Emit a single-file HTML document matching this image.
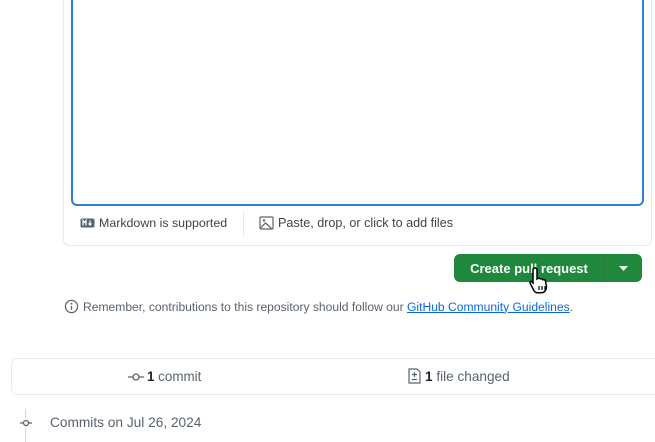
<!DOCTYPE html>
<html><head><style>
body{margin:0;width:655px;height:442px;overflow:hidden;background:#fff;font-family:"Liberation Sans",sans-serif;position:relative;color:#1f2328}
.a{position:absolute}
</style></head><body>
<div class="a" style="left:63px;top:-10px;width:587px;height:254px;border:1px solid #e8eaed;border-radius:6px"></div>
<div class="a" style="left:71px;top:-10px;width:569px;height:212px;border:2px solid #2f7fd6;border-radius:6px"></div>
<div class="a" style="left:80px;top:216px;font-size:12.4px;color:#3d444d;display:flex;align-items:center">
<svg width="15" height="10" viewBox="0 0 15 10" style="margin-right:4px"><rect x="0.5" y="0.5" width="14" height="9" rx="1.5" fill="#59636e"/><path d="M3 7.5V2.5l1.5 2 1.5-2v5M10 2.5v4M8.5 5.5l1.5 1.5 1.5-1.5" stroke="#fff" stroke-width="1.2" fill="none"/></svg>Markdown is supported</div>
<div class="a" style="left:243px;top:210px;width:1px;height:28px;background:#e8eaed"></div>
<div class="a" style="left:259px;top:216px;font-size:12.6px;color:#3d444d;display:flex;align-items:center">
<svg width="15" height="14" viewBox="0 0 15 14" style="margin-right:4px"><rect x="1" y="1" width="13" height="12" rx="1" fill="none" stroke="#59636e" stroke-width="1.2"/><circle cx="5" cy="4.5" r="1.2" fill="#59636e"/><path d="M1.5 12l5-5 6 5.5" stroke="#59636e" stroke-width="1.2" fill="none"/></svg>Paste, drop, or click to add files</div>
<div class="a" style="left:454px;top:254px;width:188px;height:28px;background:#1f883d;border-radius:6px"></div>
<div class="a" style="left:604px;top:254px;width:1px;height:28px;background:#2c7a3d"></div>
<div class="a" style="left:454px;top:261px;width:150px;text-align:center;color:#fff;font-size:13px;font-weight:bold">Create pull request</div>
<svg class="a" style="left:619px;top:266px" width="9" height="5"><path d="M0 0h9L4.5 5z" fill="#fff"/></svg>
<svg class="a" style="left:528px;top:266px" width="26" height="30" viewBox="0 0 26 30"><path d="M7 2c1.5 0 2 1 2 2v9l1-.5c1-.5 2 0 2.5.5 1-.5 2 0 2.5.8 1-.4 2 0 2.5 1l1 6c0 3-2 6-5 6h-4c-2 0-3-1-4-3L2 17c-.5-1 .5-2 1.5-1.5L5 17V4c0-1 .5-2 2-2z" fill="#fff" stroke="#000" stroke-width="1.5"/><path d="M11 20v4M14 20v4M17 20v4" stroke="#000" stroke-width="1.2"/></svg>
<div class="a" style="left:64px;top:299px;font-size:12.1px;color:#59636e;display:flex;align-items:center">
<svg width="15" height="15" viewBox="0 0 16 16" style="margin-right:4px"><circle cx="8" cy="8" r="6.5" fill="none" stroke="#59636e" stroke-width="1.3"/><circle cx="8" cy="5" r="1" fill="#59636e"/><path d="M8 7.5v4" stroke="#59636e" stroke-width="1.4"/></svg>Remember, contributions to this repository should follow our&nbsp;<span style="color:#0969da;text-decoration:underline">GitHub Community Guidelines</span>.</div>
<div class="a" style="left:11px;top:358px;width:660px;height:35px;border:1px solid #e8eaed;border-radius:6px"></div>
<div class="a" style="left:128px;top:369px;font-size:13.4px;color:#59636e;display:flex;align-items:center">
<svg width="16" height="10" viewBox="0 0 16 10" style="margin-right:3px"><circle cx="8" cy="5" r="3" fill="none" stroke="#59636e" stroke-width="1.3"/><path d="M0 5h5M11 5h5" stroke="#59636e" stroke-width="1.3"/></svg><b style="color:#1f2328">1</b>&nbsp;commit</div>
<div class="a" style="left:408px;top:368px;font-size:13.6px;color:#59636e;display:flex;align-items:center">
<svg width="13" height="16" viewBox="0 0 13 16" style="margin-right:4px"><path d="M1 1h8l3 3v11H1z" fill="none" stroke="#59636e" stroke-width="1.2"/><path d="M6.5 4v5M4 6.5h5M4 11.5h5" stroke="#59636e" stroke-width="1.2"/></svg><b style="color:#1f2328">1</b>&nbsp;file changed</div>
<div class="a" style="left:25px;top:409px;width:1px;height:33px;background:#d1d9e0"></div>
<svg class="a" style="left:18px;top:418px" width="16" height="10" viewBox="0 0 16 10"><rect x="3" y="0" width="10" height="10" fill="#fff"/><circle cx="8" cy="5" r="2.5" fill="#fff" stroke="#59636e" stroke-width="1.3"/><path d="M2 5h3.5M10.5 5H14" stroke="#59636e" stroke-width="1.3"/></svg>
<div class="a" style="left:50px;top:415px;font-size:13.7px;color:#59636e">Commits on Jul 26, 2024</div>
</body></html>
